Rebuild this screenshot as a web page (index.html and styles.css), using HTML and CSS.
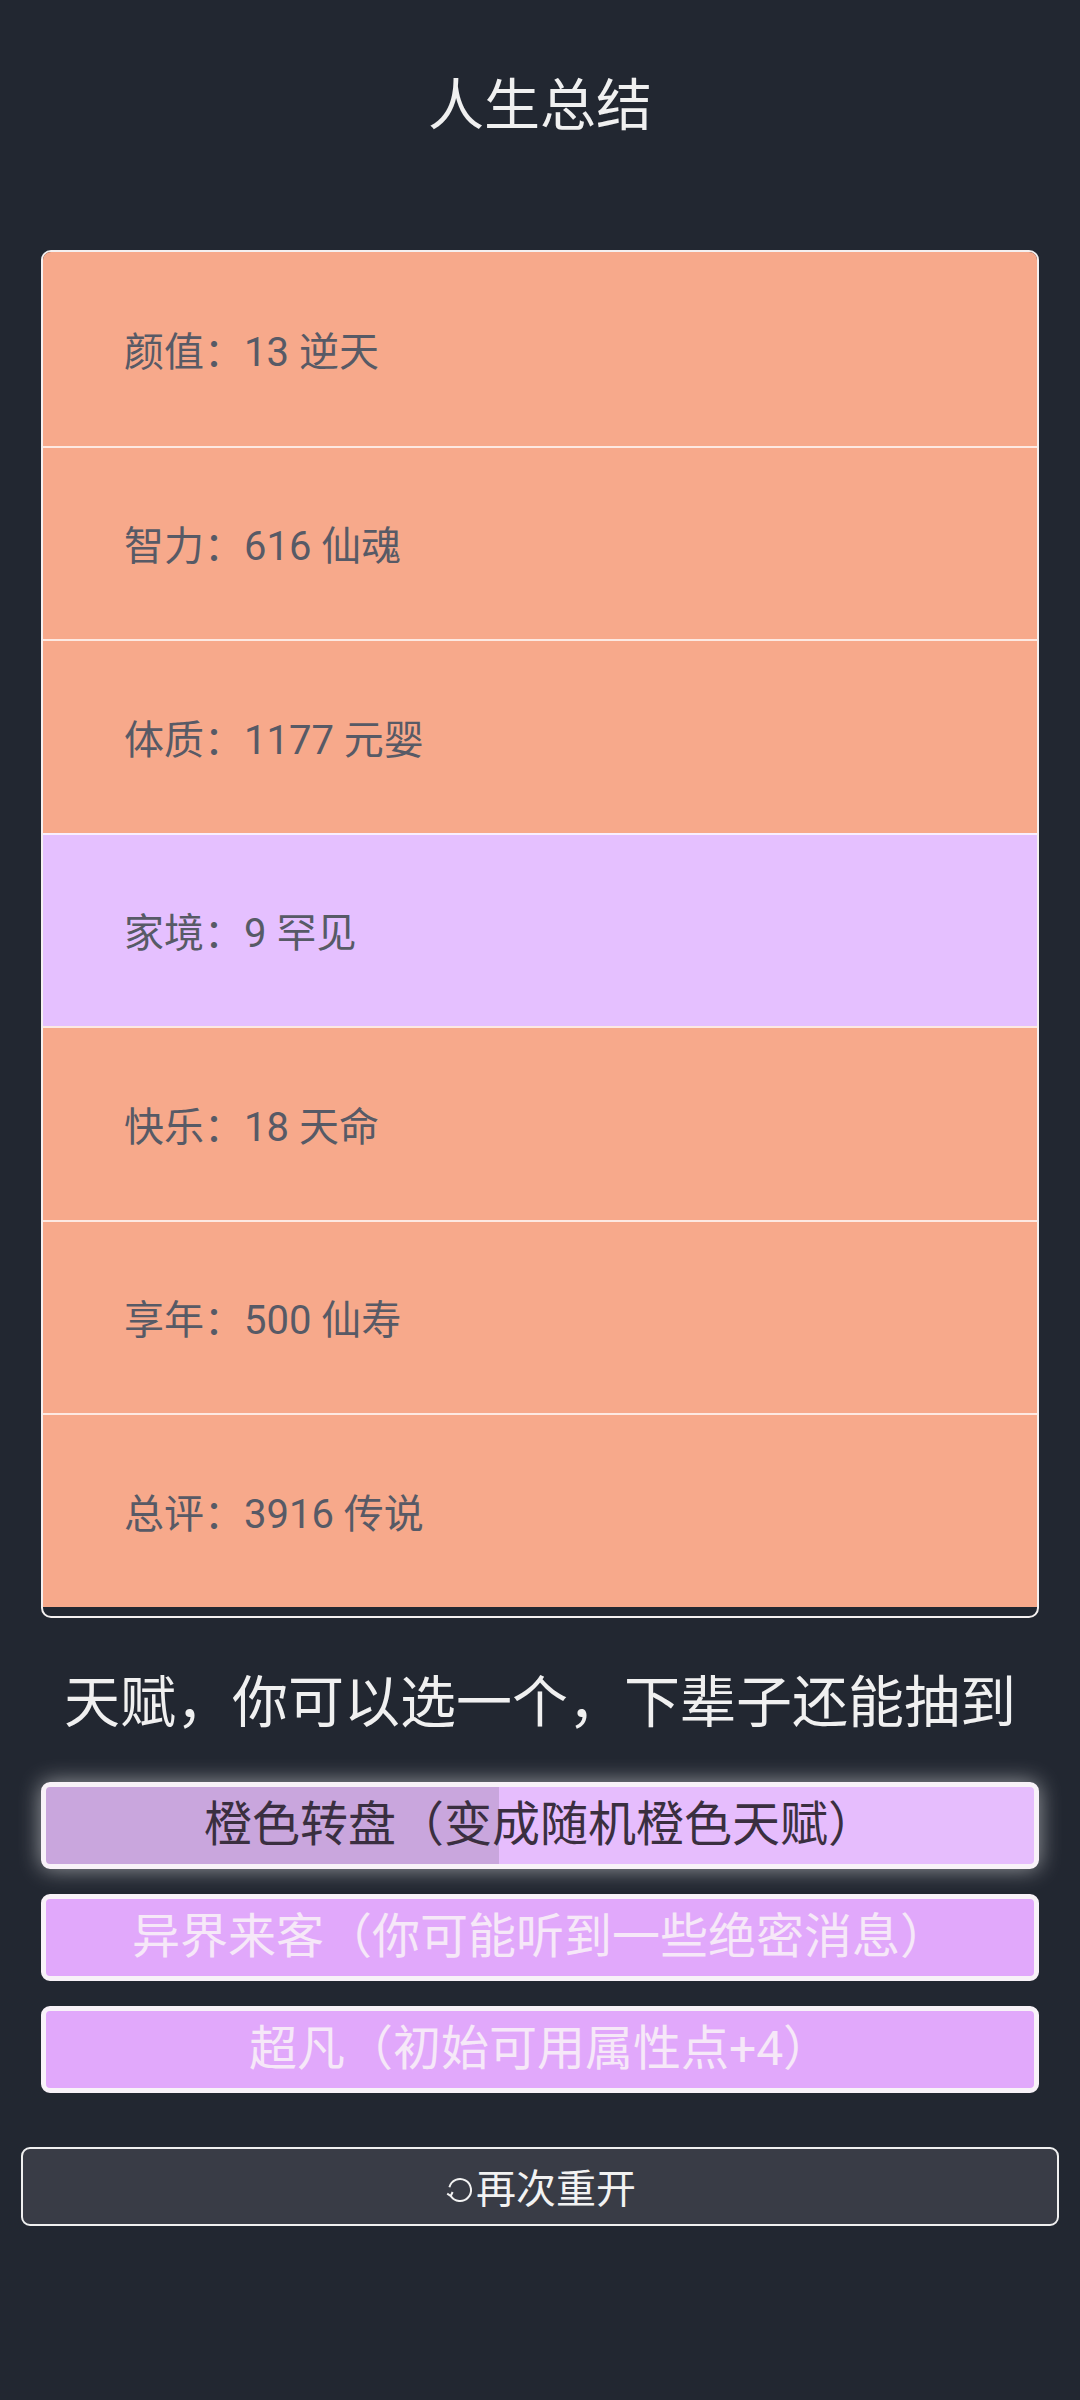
FILE: index.html
```html
<!DOCTYPE html>
<html lang="zh-CN">
<head>
    <meta charset="UTF-8">
    <meta name="viewport" content="width=device-width, initial-scale=1.0">
    <title>人生总结</title>
    <link rel="stylesheet" href="styles.css">
</head>
<body>
    <div class="container">
        <h1 class="title">人生总结</h1>

        <!-- Summary list -->
        <ul class="summary">
            <li class="item grade-orange">颜值：13 逆天</li>
            <li class="item grade-orange">智力：616 仙魂</li>
            <li class="item grade-orange">体质：1177 元婴</li>
            <li class="item grade-purple">家境：9 罕见</li>
            <li class="item grade-orange">快乐：18 天命</li>
            <li class="item grade-orange">享年：500 仙寿</li>
            <li class="item grade-orange">总评：3916 传说</li>
        </ul>

        <h2 class="heading">天赋，你可以选一个，下辈子还能抽到</h2>

        <div class="talents">
            <button class="talent selected">橙色转盘（变成随机橙色天赋）</button>
            <button class="talent">异界来客（你可能听到一些绝密消息）</button>
            <button class="talent">超凡（初始可用属性点+4）</button>
        </div>
    </div>

    <button class="restart">
        <svg class="restart-icon" width="32" height="32" viewBox="0 0 32 32">
            <path d="M5.4 13.2 A11 11 0 1 1 6.8 22" fill="none" stroke="#f2f2f2" stroke-width="2"/>
            <path d="M3.2 19.6 L6.8 22 L8.6 18" fill="none" stroke="#f2f2f2" stroke-width="2"/>
        </svg>再次重开
    </button>
</body>
</html>
```

FILE: styles.css
```css
/* Basic styles */
*, *::before, *::after {
    box-sizing: border-box;
    margin: 0;
    padding: 0;
}

body {
    font-family: Roboto, "Noto Sans CJK SC", sans-serif;
    background-color: #222731;
    color: #f0f0f0;
    min-height: 100vh;
}

.container {
    padding: 0 41px;
}

.title {
    font-size: 56px;
    font-weight: 400;
    line-height: 67px;
    text-align: center;
    margin-top: 73px;
    margin-bottom: 110px;
}

.summary {
    list-style: none;
    border: 2px solid #f4f0f0;
    border-radius: 10px;
    overflow: hidden;
    padding-bottom: 9px;
}

.item {
    height: 193.5px;
    display: flex;
    align-items: center;
    padding-left: 81px;
    font-size: 40px;
    color: #575a66;
}

.item + .item {
    border-top: 2px solid rgba(255, 255, 255, 0.75);
}

.grade-orange {
    background-color: #f7a98b;
}

.grade-purple {
    background-color: #e5c0ff;
}

.heading {
    font-size: 56px;
    font-weight: 400;
    line-height: 67px;
    text-align: center;
    margin-top: 52px;
    margin-bottom: 45px;
    white-space: nowrap;
}

.talents {
    display: flex;
    flex-direction: column;
    gap: 25px;
}

.talent {
    height: 87px;
    border: 5px solid #f8f2f8;
    border-radius: 9px;
    background-color: #e1a8fb;
    color: #f6e8f8;
    font-family: Roboto, "Noto Sans CJK SC", sans-serif;
    font-size: 48px;
    line-height: 1;
    text-align: center;
}

.talent.selected {
    background: linear-gradient(to right, #c9a6dd 0, #c9a6dd 453px, #e6bdfd 453px);
    color: #3a2f40;
    box-shadow: 0 0 22px rgba(255, 255, 255, 0.55);
}

.restart {
    display: flex;
    align-items: center;
    justify-content: center;
    width: 1038px;
    height: 79px;
    margin: 54px 21px 0;
    border: 2px solid #f0f0f0;
    border-radius: 9px;
    background-color: #393c46;
    color: #f2f2f2;
    font-family: Roboto, "Noto Sans CJK SC", sans-serif;
    font-size: 40px;
}

.restart-icon {
    margin-top: 8px;
}
```
